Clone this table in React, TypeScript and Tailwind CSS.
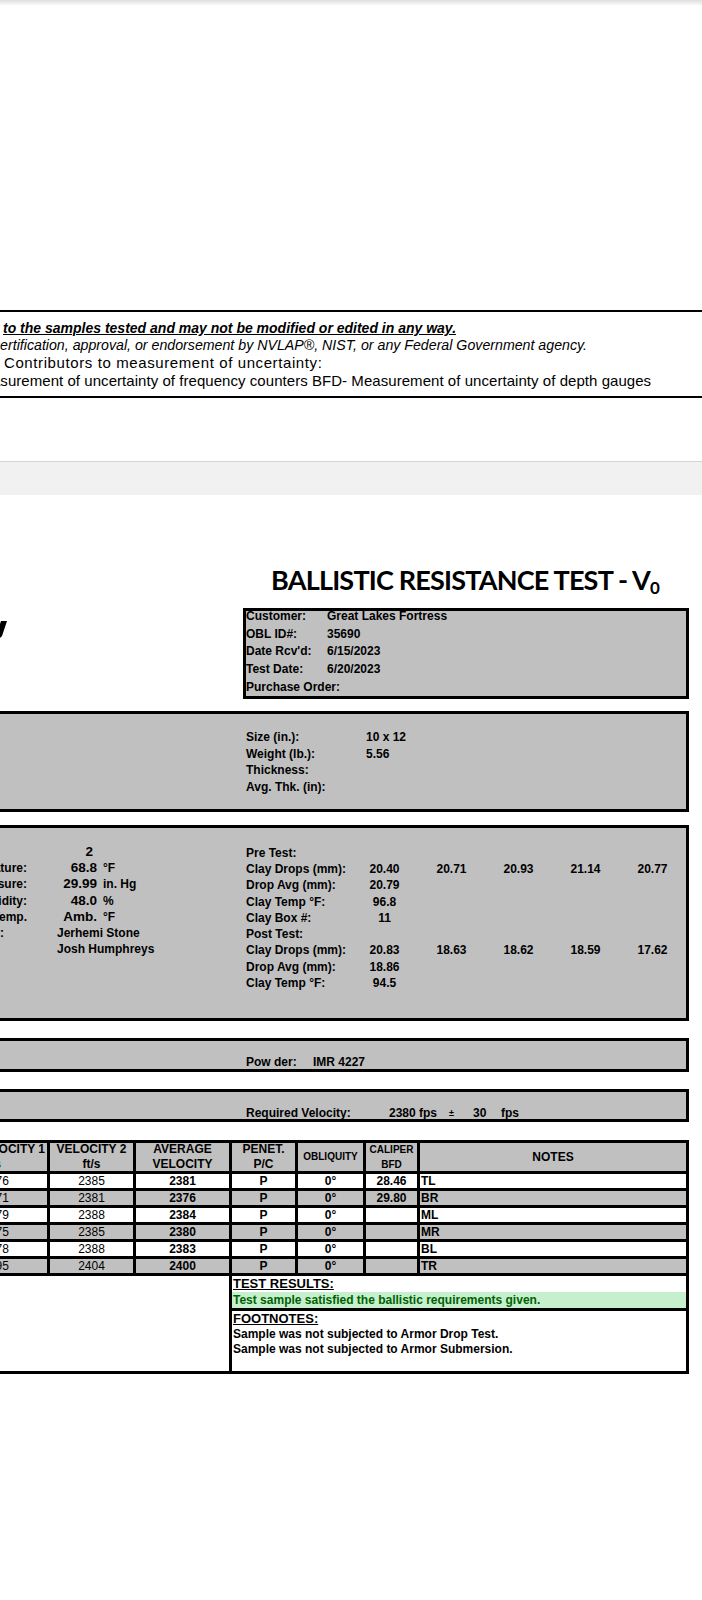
const rows = [
  { v1: "2376", v2: "2385", avg: "2381", pen: "P", obl: "0°", bfd: "28.46", note: "TL" },
  { v1: "2371", v2: "2381", avg: "2376", pen: "P", obl: "0°", bfd: "29.80", note: "BR" },
  { v1: "2379", v2: "2388", avg: "2384", pen: "P", obl: "0°", bfd: "", note: "ML" },
  { v1: "2375", v2: "2385", avg: "2380", pen: "P", obl: "0°", bfd: "", note: "MR" },
  { v1: "2378", v2: "2388", avg: "2383", pen: "P", obl: "0°", bfd: "", note: "BL" },
  { v1: "2395", v2: "2404", avg: "2400", pen: "P", obl: "0°", bfd: "", note: "TR" },
];

const customer = [
  ["Customer:", "Great Lakes Fortress"],
  ["OBL ID#:", "35690"],
  ["Date Rcv'd:", "6/15/2023"],
  ["Test Date:", "6/20/2023"],
  ["Purchase Order:", ""],
];

const sample = [
  ["Size (in.):", "10 x 12"],
  ["Weight (lb.):", "5.56"],
  ["Thickness:", ""],
  ["Avg. Thk. (in):", ""],
];

const env = [
  { label: "", value: "2", unit: "", name: "" },
  { label: "Temperature:", value: "68.8", unit: "°F", name: "" },
  { label: "Pressure:", value: "29.99", unit: "in. Hg", name: "" },
  { label: "Humidity:", value: "48.0", unit: "%", name: "" },
  { label: "Ammo Temp.", value: "Amb.", unit: "°F", name: "" },
  { label: "Shooter:", value: "", unit: "", name: "Jerhemi Stone" },
  { label: "", value: "", unit: "", name: "Josh Humphreys" },
  { label: "", value: "", unit: "", name: "" },
  { label: "", value: "", unit: "", name: "" },
];

const clay = [
  ["Pre Test:", "", "", "", "", ""],
  ["Clay Drops (mm):", "20.40", "20.71", "20.93", "21.14", "20.77"],
  ["Drop Avg (mm):", "20.79", "", "", "", ""],
  ["Clay Temp °F:", "96.8", "", "", "", ""],
  ["Clay Box #:", "11", "", "", "", ""],
  ["Post Test:", "", "", "", "", ""],
  ["Clay Drops (mm):", "20.83", "18.63", "18.62", "18.59", "17.62"],
  ["Drop Avg (mm):", "18.86", "", "", "", ""],
  ["Clay Temp °F:", "94.5", "", "", "", ""],
];

function HeadCell({ top, bottom, small }: { top: string; bottom?: string; small?: boolean }) {
  const size = small ? "text-[10px]" : "text-[12px]";
  if (!bottom) {
    return (
      <div className={`flex h-[28px] items-center justify-center bg-[#c0c0c0] font-bold ${size}`}>{top}</div>
    );
  }
  return (
    <div className={`flex h-[28px] flex-col items-center justify-between bg-[#c0c0c0] font-bold leading-[13px] whitespace-nowrap ${size}`}>
      <span>{top}</span>
      <span>{bottom}</span>
    </div>
  );
}

export default function App() {
  return (
    <div className="w-[702px] overflow-hidden bg-white font-['Liberation_Sans',Arial,sans-serif] text-black">
      <div className="h-[6px] bg-gradient-to-b from-[#dedede] to-white" />
      <div className="h-[304px]" />

      {/* end of page 1 */}
      <div className="border-y-2 border-black pt-[8px] pb-[6px] whitespace-nowrap">
        <div className="pl-[3px] text-[14px] leading-[17px] font-bold italic underline">
          to the samples tested and may not be modified or edited in any way.
        </div>
        <div className="-ml-[7px] text-[14.2px] leading-[17px] italic">
          certification, approval, or endorsement by NVLAP®, NIST, or any Federal Government agency.
        </div>
        <div className="pl-[4px] text-[15px] leading-[18px] tracking-[0.6px]">Contributors to measurement of uncertainty:</div>
        <div className="-ml-[29px] text-[15px] leading-[18px] tracking-[0.05px]">
          Measurement of uncertainty of frequency counters BFD- Measurement of uncertainty of depth gauges
        </div>
      </div>

      <div className="h-[63px]" />
      <div className="h-[34px] border-t border-[#d4d4d4] bg-[#f1f1f1]" />

      {/* page 2 */}
      <div className="pt-[69px] pr-[13px] pb-[226px] text-[12px] font-bold">
        <div className="flex justify-end pr-[30px]">
          <h1 className="h-[32px] font-['Lato',sans-serif] text-[27px] leading-[32px] font-bold tracking-[-0.8px] whitespace-nowrap">
            BALLISTIC RESISTANCE TEST - V<sub className="text-[17px]">0</sub>
          </h1>
        </div>

        <div className="mt-[12px] flex">
          <svg className="mt-[13px]" width="7" height="17" viewBox="0 0 7 17">
            <polygon points="1,0 7,0 2,15 0,17 0,3" fill="#000" />
          </svg>
          <div className="ml-auto w-[446px] border-[3px] border-black bg-[#c0c0c0]">
            {customer.map(([k, v], i) => (
              <div
                key={k}
                className={`flex h-[17.75px] items-center leading-[14px] whitespace-nowrap ${i === 0 ? "-mt-[4px]" : ""}`}
              >
                <span className="w-[81px]">{k}</span>
                <span>{v}</span>
              </div>
            ))}
          </div>
        </div>

        <div className="mt-[12px] h-[101px] border-y-[3px] border-r-[3px] border-black bg-[#c0c0c0] pt-[15px] pl-[246px]">
          {sample.map(([k, v]) => (
            <div key={k} className="flex h-[16.5px] items-center">
              <span className="w-[120px]">{k}</span>
              <span>{v}</span>
            </div>
          ))}
        </div>

        <div className="mt-[13px] flex h-[196px] border-y-[3px] border-r-[3px] border-black bg-[#c0c0c0] pt-[16px]">
          <div className="w-[246px]">
            {env.map((r, i) => (
              <div key={i} className="flex h-[16.25px] items-center whitespace-nowrap">
                <div className={`flex w-[27px] justify-end ${r.label === "Shooter:" ? "pr-[23px]" : ""}`}>
                  <span>{r.label}</span>
                </div>
                {r.name ? (
                  <span className="ml-[30px]">{r.name}</span>
                ) : (
                  <>
                    <div className={`flex w-[70px] justify-end text-[13.5px] ${r.unit ? "" : "pr-[4px]"}`}>{r.value}</div>
                    <span className="ml-[6px]">{r.unit}</span>
                  </>
                )}
              </div>
            ))}
          </div>
          <div>
            {clay.map((r, i) => (
              <div key={i} className="grid h-[16.25px] grid-cols-[105px_67px_67px_67px_67px_67px] items-center whitespace-nowrap">
                <span>{r[0]}</span>
                {r.slice(1).map((c, j) => (
                  <span key={j} className="text-center">{c}</span>
                ))}
              </div>
            ))}
          </div>
        </div>

        <div className="mt-[17px] h-[34px] border-y-[3px] border-r-[3px] border-black bg-[#c0c0c0] pt-[14px] pl-[246px] leading-[14px]">
          <div className="flex">
            <span className="w-[67px]">Pow der:</span>
            <span>IMR 4227</span>
          </div>
        </div>

        <div className="mt-[17px] h-[33px] border-y-[3px] border-r-[3px] border-black bg-[#c0c0c0] pt-[14px] pl-[246px] leading-[14px]">
          <div className="flex items-center whitespace-nowrap">
            <span className="w-[143px]">Required Velocity:</span>
            <span className="w-[60px]">2380 fps</span>
            <span className="w-[24px] text-[9px]">±</span>
            <span className="w-[28px]">30</span>
            <span>fps</span>
          </div>
        </div>

        <div className="mt-[18px] -ml-[41px] grid w-[730px] grid-cols-[85px_83px_93px_63px_65px_51px_266px] gap-[3px] border-[3px] border-black bg-black">
          <div className="flex h-[28px] flex-col justify-between bg-[#c0c0c0] leading-[13px] whitespace-nowrap">
            <span className="self-end pr-[2px]">VELOCITY 1</span>
            <span className="self-center pr-[25px]">ft/s</span>
          </div>
          <HeadCell top="VELOCITY 2" bottom="ft/s" />
          <HeadCell top="AVERAGE" bottom="VELOCITY" />
          <HeadCell top="PENET." bottom="P/C" />
          <HeadCell top="OBLIQUITY" small />
          <HeadCell top="CALIPER" bottom="BFD" small />
          <HeadCell top="NOTES" />

          {rows.map((r, i) => {
            const bg = i % 2 === 0 ? "bg-white" : "bg-[#c0c0c0]";
            const cell = `h-[14px] ${bg} text-center leading-[14px]`;
            return [
              <div key={`a${i}`} className={`${cell} pr-[18px] font-normal`}>{r.v1}</div>,
              <div key={`b${i}`} className={`${cell} font-normal`}>{r.v2}</div>,
              <div key={`c${i}`} className={cell}>{r.avg}</div>,
              <div key={`d${i}`} className={cell}>{r.pen}</div>,
              <div key={`e${i}`} className={cell}>{r.obl}</div>,
              <div key={`f${i}`} className={cell}>{r.bfd}</div>,
              <div key={`g${i}`} className={`h-[14px] ${bg} pl-[1px] leading-[14px]`}>{r.note}</div>,
            ];
          })}

          <div className="col-span-3 bg-white" />
          <div className="col-span-4 h-[95px] bg-white">
            <div className="h-[16px] pl-[1px] text-[13px] leading-[16px] underline">TEST RESULTS:</div>
            <div className="h-[19px] border-b-[3px] border-black bg-[#c6efce] pl-[1px] leading-[16px] text-[#006100]">
              Test sample satisfied the ballistic requirements given.
            </div>
            <div className="h-[16px] pl-[1px] text-[13px] leading-[16px] underline">FOOTNOTES:</div>
            <div className="pl-[1px] leading-[15px]">Sample was not subjected to Armor Drop Test.</div>
            <div className="pl-[1px] leading-[15px]">Sample was not subjected to Armor Submersion.</div>
          </div>
        </div>
      </div>
    </div>
  );
}
